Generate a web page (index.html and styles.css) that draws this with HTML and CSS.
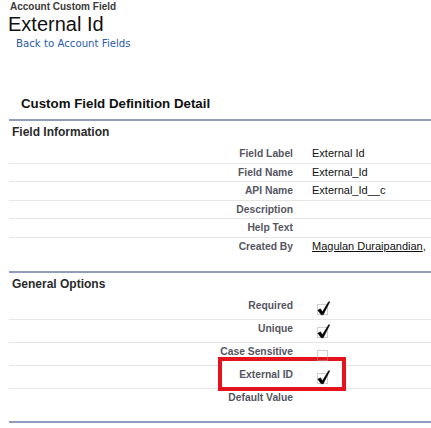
FILE: index.html
```html
<!doctype html>
<html>
    <head>
        <link rel="stylesheet" href="styles.css">
    </head>
    <body>
        <div class="page-head">
            <div class="page-type">Account Custom Field</div>
            <h1 class="page-title">External Id</h1>
            <div class="back"><a href="#">Back to Account Fields</a></div>
        </div>

        <h2 class="detail-title">Custom Field Definition Detail</h2>

        <div class="block info">
            <h3 class="block-head">Field Information</h3>
            <div class="row"><div class="label">Field Label</div><div class="value">External Id</div></div>
            <div class="row"><div class="label">Field Name</div><div class="value">External_Id</div></div>
            <div class="row"><div class="label">API Name</div><div class="value">External_Id__c</div></div>
            <div class="row"><div class="label">Description</div><div class="value"></div></div>
            <div class="row"><div class="label">Help Text</div><div class="value"></div></div>
            <div class="row"><div class="label">Created By</div><div class="value"><a href="#">Magulan Duraipandian</a>,</div></div>
        </div>

        <div class="block options">
            <h3 class="block-head">General Options</h3>
            <div class="row">
                <div class="label">Required</div>
                <div class="value">
                    <svg class="checkbox" width="16" height="16" viewBox="0 0 16 16">
                        <rect x="1.5" y="4.5" width="10" height="10" class="box"/>
                        <path d="M1.8 10.2 L5.2 14.8 L7.2 14.8 L13.8 1.8 L12.6 1.8 L6.4 11.8 L4.4 8.8 Z" class="tick"/>
                    </svg>
                </div>
            </div>
            <div class="row">
                <div class="label">Unique</div>
                <div class="value">
                    <svg class="checkbox" width="16" height="16" viewBox="0 0 16 16">
                        <rect x="1.5" y="4.5" width="10" height="10" class="box"/>
                        <path d="M1.8 10.2 L5.2 14.8 L7.2 14.8 L13.8 1.8 L12.6 1.8 L6.4 11.8 L4.4 8.8 Z" class="tick"/>
                    </svg>
                </div>
            </div>
            <div class="row">
                <div class="label">Case Sensitive</div>
                <div class="value">
                    <svg class="checkbox" width="16" height="16" viewBox="0 0 16 16">
                        <rect x="1.5" y="4.5" width="10" height="10" class="box"/>
                    </svg>
                </div>
            </div>
            <div class="row marked">
                <div class="highlight"></div>
                <div class="label">External ID</div>
                <div class="value">
                    <svg class="checkbox" width="16" height="16" viewBox="0 0 16 16">
                        <rect x="1.5" y="4.5" width="10" height="10" class="box"/>
                        <path d="M1.8 10.2 L5.2 14.8 L7.2 14.8 L13.8 1.8 L12.6 1.8 L6.4 11.8 L4.4 8.8 Z" class="tick"/>
                    </svg>
                </div>
            </div>
            <div class="row"><div class="label">Default Value</div><div class="value"></div></div>
        </div>
        <div class="block-end"></div>
    </body>
</html>
```

FILE: styles.css
```css
body {
    margin: 0;
    overflow: hidden;
    font-family: "Liberation Sans", Arial, sans-serif;
    color: #000;
    background: #fff;
}
h1, h2, h3 {
    margin: 0;
}

/* page header */
.page-type {
    margin-top: 1px;
    padding-left: 10px;
    font-size: 10px;
    line-height: 12px;
    font-weight: bold;
    color: #3a3a3a;
}
.page-title {
    padding-left: 8px;
    font-size: 20px;
    line-height: 22px;
    font-weight: normal;
    color: #111;
}
.back {
    margin-top: 2.5px;
    padding-left: 16px;
    font-family: "DejaVu Sans", Verdana, sans-serif;
    font-size: 10.2px;
    line-height: 12px;
}
.back a {
    color: #2a5ca8;
    text-decoration: none;
}

.detail-title {
    margin-top: 46px;
    padding-left: 21px;
    font-size: 13.3px;
    line-height: 16px;
    font-weight: bold;
    color: #111;
}

/* detail blocks */
.block {
    margin-left: 9px;
    border-top: 2px solid #8e9cbd;
}
.info {
    margin-top: 7.5px;
    margin-bottom: 16px;
}
.block-head {
    padding: 4px 0 6px 3px;
    font-size: 12px;
    line-height: 14px;
    font-weight: bold;
    color: #2a2a2a;
}
.row {
    display: grid;
    grid-template-columns: 288px 1fr;
    border-bottom: 1px solid #e6e6e6;
    line-height: 17.5px;
    white-space: nowrap;
}
.row:last-child {
    border-bottom: none;
}
.label {
    padding-right: 4px;
    text-align: right;
    font-size: 10.3px;
    font-weight: bold;
    color: #55555f;
}
.value {
    padding-left: 15px;
    font-size: 11px;
    color: #111;
}
.value a {
    color: #111;
}

/* option rows with checkboxes */
.options .row {
    position: relative;
    box-sizing: border-box;
    height: 23px;
    padding-top: 2px;
    line-height: 14px;
}
.options .row:last-child {
    height: 22px;
}
.options .label,
.options .value {
    position: relative;
    z-index: 1;
}
.checkbox {
    display: block;
    margin: 1px 0 0 4px;
}
.checkbox .box {
    fill: none;
    stroke: #a0a0a0;
    stroke-width: 1;
    stroke-dasharray: 1 1;
}
.checkbox .tick {
    fill: #000;
    stroke: #000;
    stroke-width: 0.5;
    stroke-linejoin: round;
}

/* red outline drawn round the External ID row */
.highlight {
    position: absolute;
    left: 209px;
    top: -9px;
    width: 128px;
    height: 34px;
    box-sizing: border-box;
    border: 4px solid #e5141c;
    background: #fff;
    z-index: 0;
}

.block-end {
    margin: 10px 0 0 9px;
    height: 2px;
    background: #8e9cbd;
}
```
